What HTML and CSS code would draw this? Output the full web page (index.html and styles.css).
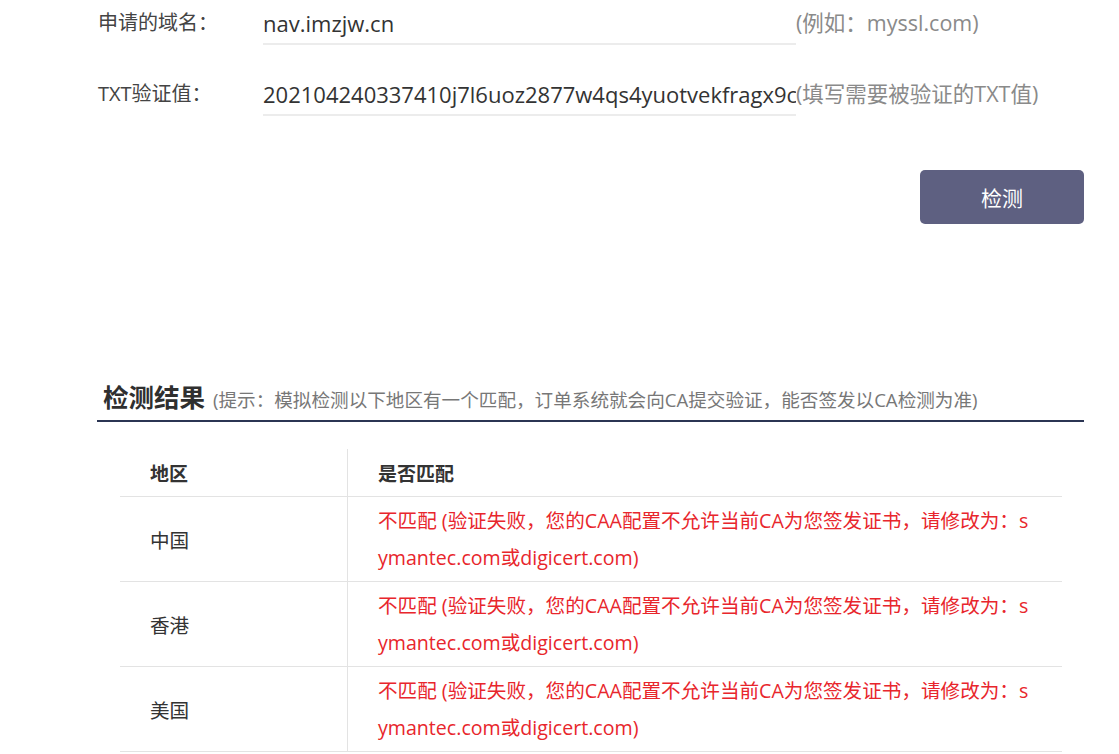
FILE: index.html
```html
<!DOCTYPE html>
<html lang="zh-CN">
<head>
<meta charset="utf-8">
<title>CAA 检测</title>
<link rel="stylesheet" href="styles.css">
</head>
<body>
<div class="page">
  <div class="form">
    <div class="row">
      <div class="label">申请的域名：</div>
      <div class="field">nav.imzjw.cn</div>
      <div class="tip">(例如：myssl.com)</div>
    </div>
    <div class="row">
      <div class="label">TXT验证值：</div>
      <div class="field">202104240337410j7l6uoz2877w4qs4yuotvekfragx9c</div>
      <div class="tip tip-tight">(填写需要被验证的TXT值)</div>
    </div>
    <div class="actions">
      <button class="btn">检测</button>
    </div>
  </div>

  <div class="result">
    <div class="result-head">
      <span class="result-title">检测结果</span>
      <span class="result-note">(提示：模拟检测以下地区有一个匹配，订单系统就会向CA提交验证，能否签发以CA检测为准)</span>
    </div>
    <table class="tbl">
      <thead>
        <tr><th class="c1">地区</th><th class="c2">是否匹配</th></tr>
      </thead>
      <tbody>
        <tr><td class="c1">中国</td><td class="c2"><div class="bad">不匹配 (验证失败，您的CAA配置不允许当前CA为您签发证书，请修改为：symantec.com或digicert.com)</div></td></tr>
        <tr><td class="c1">香港</td><td class="c2"><div class="bad">不匹配 (验证失败，您的CAA配置不允许当前CA为您签发证书，请修改为：symantec.com或digicert.com)</div></td></tr>
        <tr><td class="c1">美国</td><td class="c2"><div class="bad">不匹配 (验证失败，您的CAA配置不允许当前CA为您签发证书，请修改为：symantec.com或digicert.com)</div></td></tr>
      </tbody>
    </table>
  </div>
</div>
</body>
</html>
```

FILE: styles.css
```css
html, body {
  margin: 0;
  padding: 0;
  background: #ffffff;
}
body {
  font-family: "Open Sans", "Noto Sans CJK SC", sans-serif;
  color: #333333;
  overflow: hidden;
}
.page {
  width: 1119px;
  height: 754px;
}
.form {
  padding-left: 98px;
}
.row {
  display: flex;
  align-items: flex-start;
  height: 45px;
  margin-bottom: 26px;
}
.label {
  width: 165px;
  font-size: 20px;
  line-height: 46px;
  color: #444;
}
.field {
  width: 533px;
  height: 43px;
  border-bottom: 2px solid #ececec;
  font-size: 22px;
  line-height: 46px;
  white-space: nowrap;
  overflow: hidden;
  color: #333;
}
.tip {
  font-size: 21.5px;
  line-height: 46px;
  color: #8a8a8a;
  white-space: nowrap;
}
.actions {
  display: flex;
  justify-content: flex-end;
  padding-right: 35px;
  margin-top: 54px;
}
.btn {
  width: 164px;
  height: 54px;
  border: none;
  border-radius: 5px;
  background: #5e6081;
  color: #ffffff;
  font-family: "Open Sans", "Noto Sans CJK SC", sans-serif;
  font-size: 21px;
  cursor: pointer;
}
.result {
  margin-top: 150px;
  padding-left: 97px;
  padding-right: 35px;
}
.result-head {
  display: flex;
  align-items: baseline;
  gap: 8px;
  padding-left: 6px;
  padding-top: 4px;
  height: 42px;
  border-bottom: 2px solid #2b3553;
}
.result-title {
  font-size: 25.5px;
  font-weight: 700;
  color: #2f2f2f;
  line-height: 38px;
}
.result-note {
  font-size: 18.6px;
  color: #777;
}
.tbl {
  margin-top: 27px;
  margin-left: 23px;
  width: 942px;
  border-collapse: collapse;
}
.tbl th, .tbl td {
  text-align: left;
  padding: 0 0 0 30px;
  border-bottom: 1px solid #e3e3e3;
  vertical-align: middle;
}
.tbl th {
  height: 47px;
  font-size: 19px;
  font-weight: 700;
  color: #333;
}
.tbl td {
  height: 84px;
  font-size: 19.6px;
  color: #333;
}
.tbl .c1 {
  width: 197px;
  border-right: 1px solid #e3e3e3;
}
.bad {
  width: 656px;
  color: #e8262c;
  line-height: 37px;
  word-break: break-all;
}
```
